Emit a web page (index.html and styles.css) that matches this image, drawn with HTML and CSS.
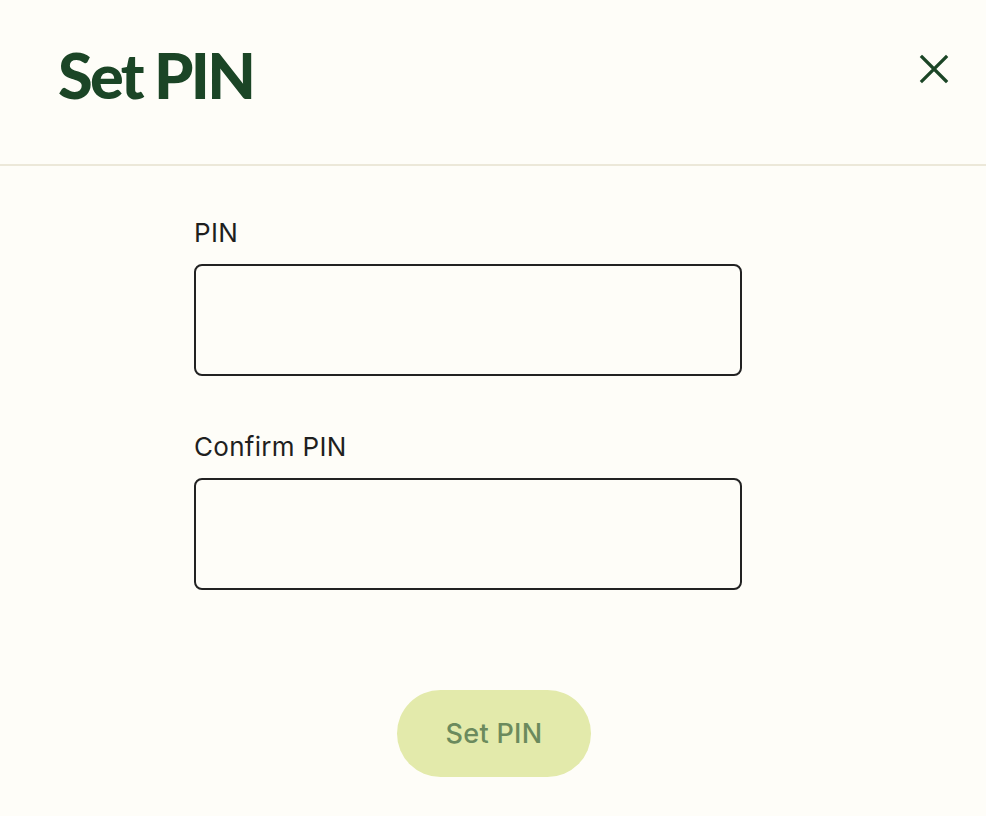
FILE: index.html
```html
<!DOCTYPE html>
<html lang="en">
<head>
<meta charset="utf-8">
<title>Set PIN</title>
<link rel="stylesheet" href="styles.css">
</head>
<body>
<div class="dialog">
  <header class="dialog-header">
    <h1 class="dialog-title">Set PIN</h1>
    <button class="close-btn" aria-label="Close">
      <svg width="30" height="30" viewBox="0 0 30 30"><path d="M3 3 L27 27 M27 3 L3 27" stroke="#1b4526" stroke-width="3.2" fill="none" stroke-linecap="square"/></svg>
    </button>
  </header>
  <form class="pin-form">
    <div class="field">
      <label class="field-label">PIN</label>
      <input class="field-input" type="password">
    </div>
    <div class="field">
      <label class="field-label">Confirm PIN</label>
      <input class="field-input" type="password">
    </div>
    <div class="actions">
      <button type="button" class="submit-btn">Set PIN</button>
    </div>
  </form>
</div>
</body>
</html>
```
FILE: styles.css
```css
html, body {
  margin: 0;
  padding: 0;
  background: #fefdf8;
}
body {
  font-family: Inter, "Liberation Sans", sans-serif;
  color: #1f1f1f;
}
.dialog {
  width: 986px;
  height: 816px;
}
.dialog-header {
  height: 166px;
  border-bottom: 2px solid #ece8d9;
  display: flex;
  align-items: flex-start;
  justify-content: space-between;
  box-sizing: border-box;
  padding: 0 37px 0 58px;
}
.dialog-title {
  margin: 40px 0 0;
  font-family: Lato, "Liberation Sans", sans-serif;
  font-weight: 900;
  font-size: 63px;
  line-height: 70px;
  color: #1b4526;
  letter-spacing: -2.7px;
}
.close-btn {
  margin-top: 54px;
  background: none;
  border: none;
  padding: 0;
  width: 30px;
  height: 30px;
  cursor: pointer;
}
.close-btn svg { display: block; }
.pin-form {
  padding: 52px 0 0 194px;
  display: flex;
  flex-direction: column;
}
.field {
  display: flex;
  flex-direction: column;
  margin-bottom: 56px;
}
.field-label {
  font-size: 26px;
  line-height: 30px;
  letter-spacing: 0.3px;
  margin-bottom: 16px;
  color: #1f1f1f;
}
.field-input {
  width: 548px;
  height: 112px;
  box-sizing: border-box;
  border: 2px solid #222;
  border-radius: 8px;
  background: transparent;
  font-size: 24px;
  padding: 0 16px;
}
.actions {
  margin-left: -194px;
  display: flex;
  justify-content: center;
  width: 988px;
}
.submit-btn {
  margin-top: 44px;
  width: 194px;
  height: 87px;
  border: none;
  border-radius: 44px;
  background: #e3eaab;
  color: #6b8a5d;
  font-family: Inter, "Liberation Sans", sans-serif;
  font-size: 27px;
  font-weight: 500;
  letter-spacing: 0.3px;
}
```
